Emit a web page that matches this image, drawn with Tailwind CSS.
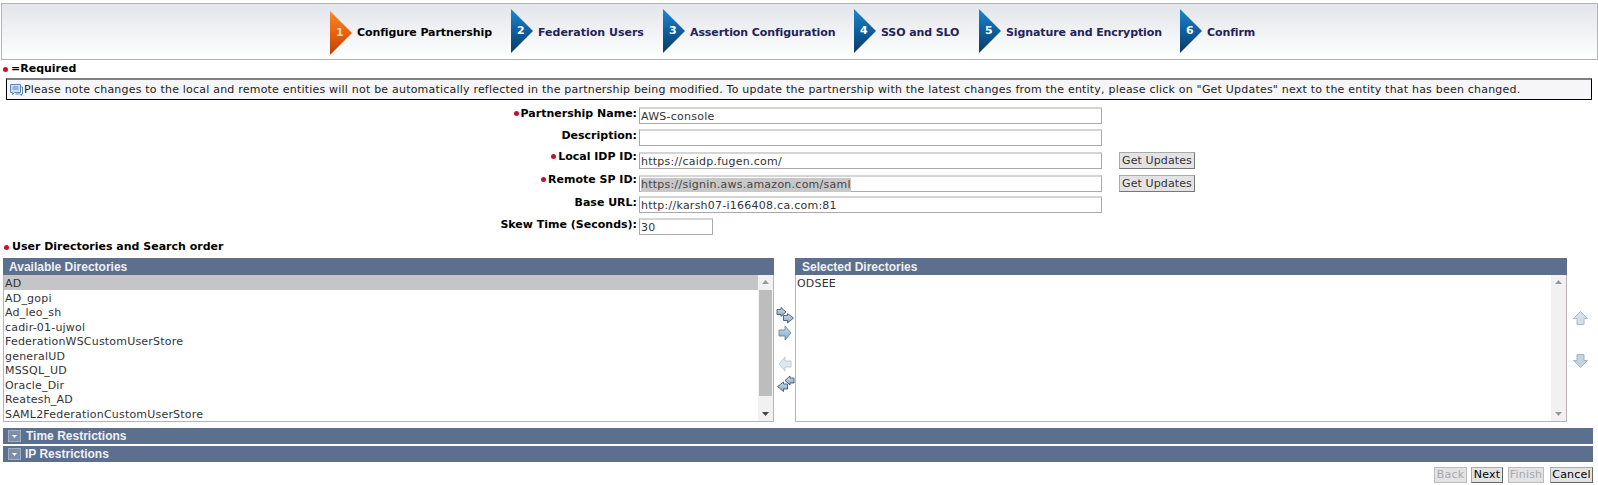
<!DOCTYPE html>
<html lang="en">
  <head>
    <meta charset="UTF-8" />
    <title>Configure Partnership</title>
    <script src="https://cdn.jsdelivr.net/npm/@tailwindcss/browser@4"></script>
  </head>
  <body class="w-[1598px] h-[485px] overflow-hidden bg-white text-[#222] text-[11px] leading-[14px] font-['DejaVu_Sans',sans-serif]">
    <svg width="0" height="0" class="absolute">
      <defs>
        <linearGradient id="blue" x1="0" y1="0" x2="0" y2="1">
          <stop offset="0" stop-color="#1c86cf" />
          <stop offset="0.5" stop-color="#0f5f9e" />
          <stop offset="1" stop-color="#0b3a66" />
        </linearGradient>
        <linearGradient id="orange" x1="0" y1="0" x2="0" y2="1">
          <stop offset="0" stop-color="#f58a2c" />
          <stop offset="0.5" stop-color="#e8610f" />
          <stop offset="1" stop-color="#b9420a" />
        </linearGradient>
        <linearGradient id="pale" x1="0" y1="0" x2="0" y2="1">
          <stop offset="0" stop-color="#cfe0ee" />
          <stop offset="1" stop-color="#7fa6c8" />
        </linearGradient>
      </defs>
    </svg>

    <!-- wizard steps -->
    <div class="mt-[3px] ml-px h-[57px] border border-[#b4b4b4] bg-gradient-to-b from-[#e2e5ea] to-white flex items-center pl-[328px] tracking-[-0.1px]">
      <div class="flex items-center w-[181px]">
        <div class="relative w-[23px] h-[44px] mt-[2px]">
          <svg width="23" height="44" viewBox="0 0 23 44" class="block"><polygon points="0,0 22,22 0,44" fill="url(#orange)" /></svg>
          <span class="absolute left-[6px] top-[15px] text-[11px] font-bold text-[#f8d9a8]">1</span>
        </div>
        <span class="ml-[4px] mt-[3px] font-bold text-black">Configure Partnership</span>
      </div>
      <div class="flex items-center w-[152px]">
        <div class="relative w-[23px] h-[44px] -mt-[1px]">
          <svg width="23" height="44" viewBox="0 0 23 44" class="block"><polygon points="0,0 22,22 0,44" fill="url(#blue)" /></svg>
          <span class="absolute left-[6px] top-[15px] text-[11px] font-bold text-white">2</span>
        </div>
        <span class="ml-[4px] mt-[2px] font-bold text-[#23235c] tracking-normal">Federation Users</span>
      </div>
      <div class="flex items-center w-[191px]">
        <div class="relative w-[23px] h-[44px] -mt-[1px]">
          <svg width="23" height="44" viewBox="0 0 23 44" class="block"><polygon points="0,0 22,22 0,44" fill="url(#blue)" /></svg>
          <span class="absolute left-[6px] top-[15px] text-[11px] font-bold text-white">3</span>
        </div>
        <span class="ml-[4px] mt-[2px] font-bold text-[#23235c]">Assertion Configuration</span>
      </div>
      <div class="flex items-center w-[125px]">
        <div class="relative w-[23px] h-[44px] -mt-[1px]">
          <svg width="23" height="44" viewBox="0 0 23 44" class="block"><polygon points="0,0 22,22 0,44" fill="url(#blue)" /></svg>
          <span class="absolute left-[6px] top-[15px] text-[11px] font-bold text-white">4</span>
        </div>
        <span class="ml-[4px] mt-[2px] font-bold text-[#23235c]">SSO and SLO</span>
      </div>
      <div class="flex items-center w-[201px]">
        <div class="relative w-[23px] h-[44px] -mt-[1px]">
          <svg width="23" height="44" viewBox="0 0 23 44" class="block"><polygon points="0,0 22,22 0,44" fill="url(#blue)" /></svg>
          <span class="absolute left-[6px] top-[15px] text-[11px] font-bold text-white">5</span>
        </div>
        <span class="ml-[4px] mt-[2px] font-bold text-[#23235c]">Signature and Encryption</span>
      </div>
      <div class="flex items-center">
        <div class="relative w-[23px] h-[44px] -mt-[1px]">
          <svg width="23" height="44" viewBox="0 0 23 44" class="block"><polygon points="0,0 22,22 0,44" fill="url(#blue)" /></svg>
          <span class="absolute left-[6px] top-[15px] text-[11px] font-bold text-white">6</span>
        </div>
        <span class="ml-[4px] mt-[2px] font-bold text-[#23235c]">Confirm</span>
      </div>
    </div>

    <!-- required legend -->
    <div class="h-[18px] pl-[3px] flex items-center font-bold text-black">
      <span class="w-[5px] h-[5px] rounded-full bg-[#c8102e] mr-[3px]"></span>=Required
    </div>

    <!-- info note -->
    <div class="ml-[6px] w-[1586px] h-[22px] border border-black border-t-2 border-t-[#808080] bg-[#f6f6f8] flex items-center pl-[2px]">
      <svg width="15" height="14" viewBox="0 0 15 14" class="shrink-0">
        <path d="M1.5 1.5h10v8h-6l-2 2v-2h-2z" fill="#cfe0f2" stroke="#5b87b8" />
        <path d="M12 4h1.5v7h-1v1.5l-2-1.5h-4" fill="none" stroke="#5b87b8" />
        <path d="M3.5 4h6M3.5 6h6" stroke="#5b87b8" />
      </svg>
      <span class="text-[#222] whitespace-nowrap tracking-[0.207px]">Please note changes to the local and remote entities will not be automatically reflected in the partnership being modified. To update the partnership with the latest changes from the entity, please click on "Get Updates" next to the entity that has been changed.</span>
    </div>

    <!-- partnership form -->
    <div class="mt-[7px] flex flex-col">
      <div class="flex h-[17px]">
        <label class="w-[637px] flex items-center justify-end h-[13px] font-bold text-black"><span class="w-[5px] h-[5px] rounded-full bg-[#c8102e] mr-[2px]"></span>Partnership Name:</label>
        <div class="ml-[2px] w-[463px] h-[17px] border border-[#aaa] border-t-2 border-t-[#d4d4d4] pl-px leading-[16px] tracking-[0.25px] text-[#333]">AWS-console</div>
      </div>
      <div class="flex h-[17px] mt-[5px]">
        <label class="w-[637px] flex items-center justify-end h-[13px] font-bold text-black">Description:</label>
        <div class="ml-[2px] w-[463px] h-[17px] border border-[#aaa] border-t-2 border-t-[#d4d4d4]"></div>
      </div>
      <div class="flex h-[17px] mt-[6px]">
        <label class="w-[637px] flex items-center justify-end h-[9px] font-bold text-black"><span class="w-[5px] h-[5px] rounded-full bg-[#c8102e] mr-[2px]"></span>Local IDP ID:</label>
        <div class="ml-[2px] w-[463px] h-[17px] border border-[#aaa] border-t-2 border-t-[#d4d4d4] pl-px leading-[16px] tracking-[0.25px] text-[#333]">https://caidp.fugen.com/</div>
        <button class="ml-[17px] w-[76px] h-[17px] bg-[#e3e3e6] border border-[#aaa] border-r-[#777] border-b-[#777] text-[#333] text-center leading-[14px] tracking-[0.1px]">Get Updates</button>
      </div>
      <div class="flex h-[17px] mt-[6px]">
        <label class="w-[637px] flex items-center justify-end h-[9px] font-bold text-black"><span class="w-[5px] h-[5px] rounded-full bg-[#c8102e] mr-[2px]"></span>Remote SP ID:</label>
        <div class="ml-[2px] w-[463px] h-[17px] border border-[#aaa] border-t-2 border-t-[#d4d4d4] pl-px leading-[16px] tracking-[0.25px] text-[#444]"><span class="bg-[#c8c8c8] inline-block h-[14px] leading-[14px]">https://signin.aws.amazon.com/saml</span></div>
        <button class="ml-[17px] w-[76px] h-[17px] bg-[#e3e3e6] border border-[#aaa] border-r-[#777] border-b-[#777] text-[#333] text-center leading-[14px] tracking-[0.1px]">Get Updates</button>
      </div>
      <div class="flex h-[17px] mt-[4px]">
        <label class="w-[637px] flex items-center justify-end h-[13px] font-bold text-black">Base URL:</label>
        <div class="ml-[2px] w-[463px] h-[17px] border border-[#aaa] border-t-2 border-t-[#d4d4d4] pl-px leading-[16px] tracking-[0.25px] text-[#333]">http://karsh07-i166408.ca.com:81</div>
      </div>
      <div class="flex h-[17px] mt-[5px]">
        <label class="w-[637px] flex items-center justify-end h-[13px] font-bold text-black">Skew Time (Seconds):</label>
        <div class="ml-[2px] w-[74px] h-[17px] border border-[#aaa] border-t-2 border-t-[#d4d4d4] pl-px leading-[16px] tracking-[0.25px] text-[#333]">30</div>
      </div>
    </div>

    <div class="mt-[4px] h-[16px] pl-[4px] flex items-center font-bold text-black">
      <span class="w-[5px] h-[5px] rounded-full bg-[#c8102e] mr-[3px]"></span>User Directories and Search order
    </div>

    <!-- directory pickers -->
    <div class="mt-[3px] ml-[3px] flex h-[164px]">
      <div class="w-[771px] flex flex-col">
        <div class="h-[17px] bg-[#5c6f8f] font-bold pl-[6px] leading-[18px] text-[#eef1f6] text-[12px] font-['Liberation_Sans',sans-serif]">Available Directories</div>
        <div class="flex-1 flex border border-t-0 border-[#b9b2b8]">
          <ul class="flex-1 text-[#333] leading-[10.5px] tracking-[0.2px]">
            <li class="bg-[#c5c5c7] pl-px pt-[4px]">AD</li>
            <li class="pl-px pt-[4px]">AD_gopi</li>
            <li class="pl-px pt-[4px]">Ad_leo_sh</li>
            <li class="pl-px pt-[4px]">cadir-01-ujwol</li>
            <li class="pl-px pt-[4px]">FederationWSCustomUserStore</li>
            <li class="pl-px pt-[4px]">generalUD</li>
            <li class="pl-px pt-[4px]">MSSQL_UD</li>
            <li class="pl-px pt-[4px]">Oracle_Dir</li>
            <li class="pl-px pt-[4px]">Reatesh_AD</li>
            <li class="pl-px pt-[4px]">SAML2FederationCustomUserStore</li>
          </ul>
          <div class="w-[15px] bg-[#f1f1f1] flex flex-col items-center justify-between py-[5px] relative">
            <svg width="7" height="4" viewBox="0 0 7 4"><polygon points="3.5,0 7,4 0,4" fill="#9a9a9a" /></svg>
            <svg width="7" height="4" viewBox="0 0 7 4"><polygon points="0,0 7,0 3.5,4" fill="#444" /></svg>
            <div class="absolute top-[15px] left-px right-px h-[106px] bg-[#bdbdbd]"></div>
          </div>
        </div>
      </div>
      <div class="w-[21px] flex flex-col items-center pt-[49px] pl-[1px]">
        <svg width="19" height="18" viewBox="0 0 19 18">
          <path d="M1 2.5h4v-2l5 4.5-5 4.5v-2h-4z" fill="url(#pale)" stroke="#33475f" stroke-width="0.8" />
          <path d="M7.5 8.5h4v-2l6 4.5-6 5v-2.500h-4z" fill="url(#pale)" stroke="#33475f" stroke-width="0.8" />
        </svg>
        <svg class="mt-0" width="14" height="16" viewBox="0 0 14 16">
          <path d="M1 5h6V1l6 7-6 7v-4H1z" fill="url(#pale)" stroke="#5a7da0" stroke-width="0.8" />
        </svg>
        <svg class="mt-[15px]" width="14" height="16" viewBox="0 0 14 16">
          <path d="M13 5H7V1L1 8l6 7v-4h6z" fill="#dfe6ec" stroke="#b4c2ce" stroke-width="0.8" />
        </svg>
        <svg class="mt-[3px]" width="19" height="18" viewBox="0 0 19 18">
          <path d="M18 3h-4V1l-5 4.500 5 4.500V8h4z" fill="url(#pale)" stroke="#33475f" stroke-width="0.8" />
          <path d="M11.500 9h-4V7l-6 4.500 6 5V14h4z" fill="url(#pale)" stroke="#33475f" stroke-width="0.8" />
        </svg>
      </div>
      <div class="w-[772px] flex flex-col">
        <div class="h-[17px] bg-[#5c6f8f] font-bold pl-[7px] leading-[18px] text-[#eef1f6] text-[12px] font-['Liberation_Sans',sans-serif]">Selected Directories</div>
        <div class="flex-1 flex border border-t-0 border-[#b9b2b8]">
          <ul class="flex-1 text-[#333] leading-[10.5px] tracking-[0.2px]">
            <li class="pl-px pt-[4px]">ODSEE</li>
          </ul>
          <div class="w-[15px] bg-[#f1f1f1] flex flex-col items-center justify-between py-[5px]">
            <svg width="7" height="4" viewBox="0 0 7 4"><polygon points="3.5,0 7,4 0,4" fill="#9a9a9a" /></svg>
            <svg width="7" height="4" viewBox="0 0 7 4"><polygon points="0,0 7,0 3.5,4" fill="#9a9a9a" /></svg>
          </div>
        </div>
      </div>
      <div class="w-[26px] flex flex-col items-center pt-[53px]">
        <svg width="15" height="14" viewBox="0 0 15 14"><path d="M7.500 0.500L14.500 7.500H11V13.500H4V7.500H0.500z" fill="#d3e0ea" stroke="#a9bccb" /></svg>
        <svg class="mt-[29px]" width="15" height="14" viewBox="0 0 15 14"><path d="M7.500 13.500L14.500 6.500H11V0.500H4V6.500H0.500z" fill="#c3d3e0" stroke="#a0b4c4" /></svg>
      </div>
    </div>

    <!-- collapsed sections -->
    <div class="mt-[6px] ml-[3px] w-[1590px] flex flex-col gap-[2px] text-[12px] font-['Liberation_Sans',sans-serif]">
      <div class="h-[16px] bg-[#5c6f8f] flex items-center pl-[5px] font-bold text-[#eef1f6]">
        <span class="w-[13px] h-[12px] bg-[#7d8ea9] border border-[#9fb0c6] flex items-center justify-center mr-[5px]"><svg width="5" height="3" viewBox="0 0 5 3"><polygon points="0,0 5,0 2.500,3" fill="#fff" /></svg></span>Time Restrictions
      </div>
      <div class="h-[16px] bg-[#5c6f8f] flex items-center pl-[5px] font-bold text-[#eef1f6]">
        <span class="w-[13px] h-[12px] bg-[#7d8ea9] border border-[#9fb0c6] flex items-center justify-center mr-[4px]"><svg width="5" height="3" viewBox="0 0 5 3"><polygon points="0,0 5,0 2.500,3" fill="#fff" /></svg></span>IP Restrictions
      </div>
    </div>

    <!-- wizard buttons -->
    <div class="mt-[5px] w-[1593px] flex justify-end tracking-[0.2px]">
      <button class="w-[33px] h-[16px] bg-[#e3e3e6] border border-[#bbb] text-[#a8a8a8] leading-[14px]">Back</button>
      <button class="ml-[4px] w-[32px] h-[16px] bg-[#e3e3e6] border border-[#aaa] border-b-[#666] border-r-[#666] text-black leading-[14px]">Next</button>
      <button class="ml-[5px] w-[36px] h-[16px] bg-[#e3e3e6] border border-[#bbb] text-[#a8a8a8] leading-[14px]">Finish</button>
      <button class="ml-[6px] w-[43px] h-[16px] bg-[#e3e3e6] border border-[#aaa] border-b-[#666] border-r-[#666] text-black leading-[14px]">Cancel</button>
    </div>
  </body>
</html>
